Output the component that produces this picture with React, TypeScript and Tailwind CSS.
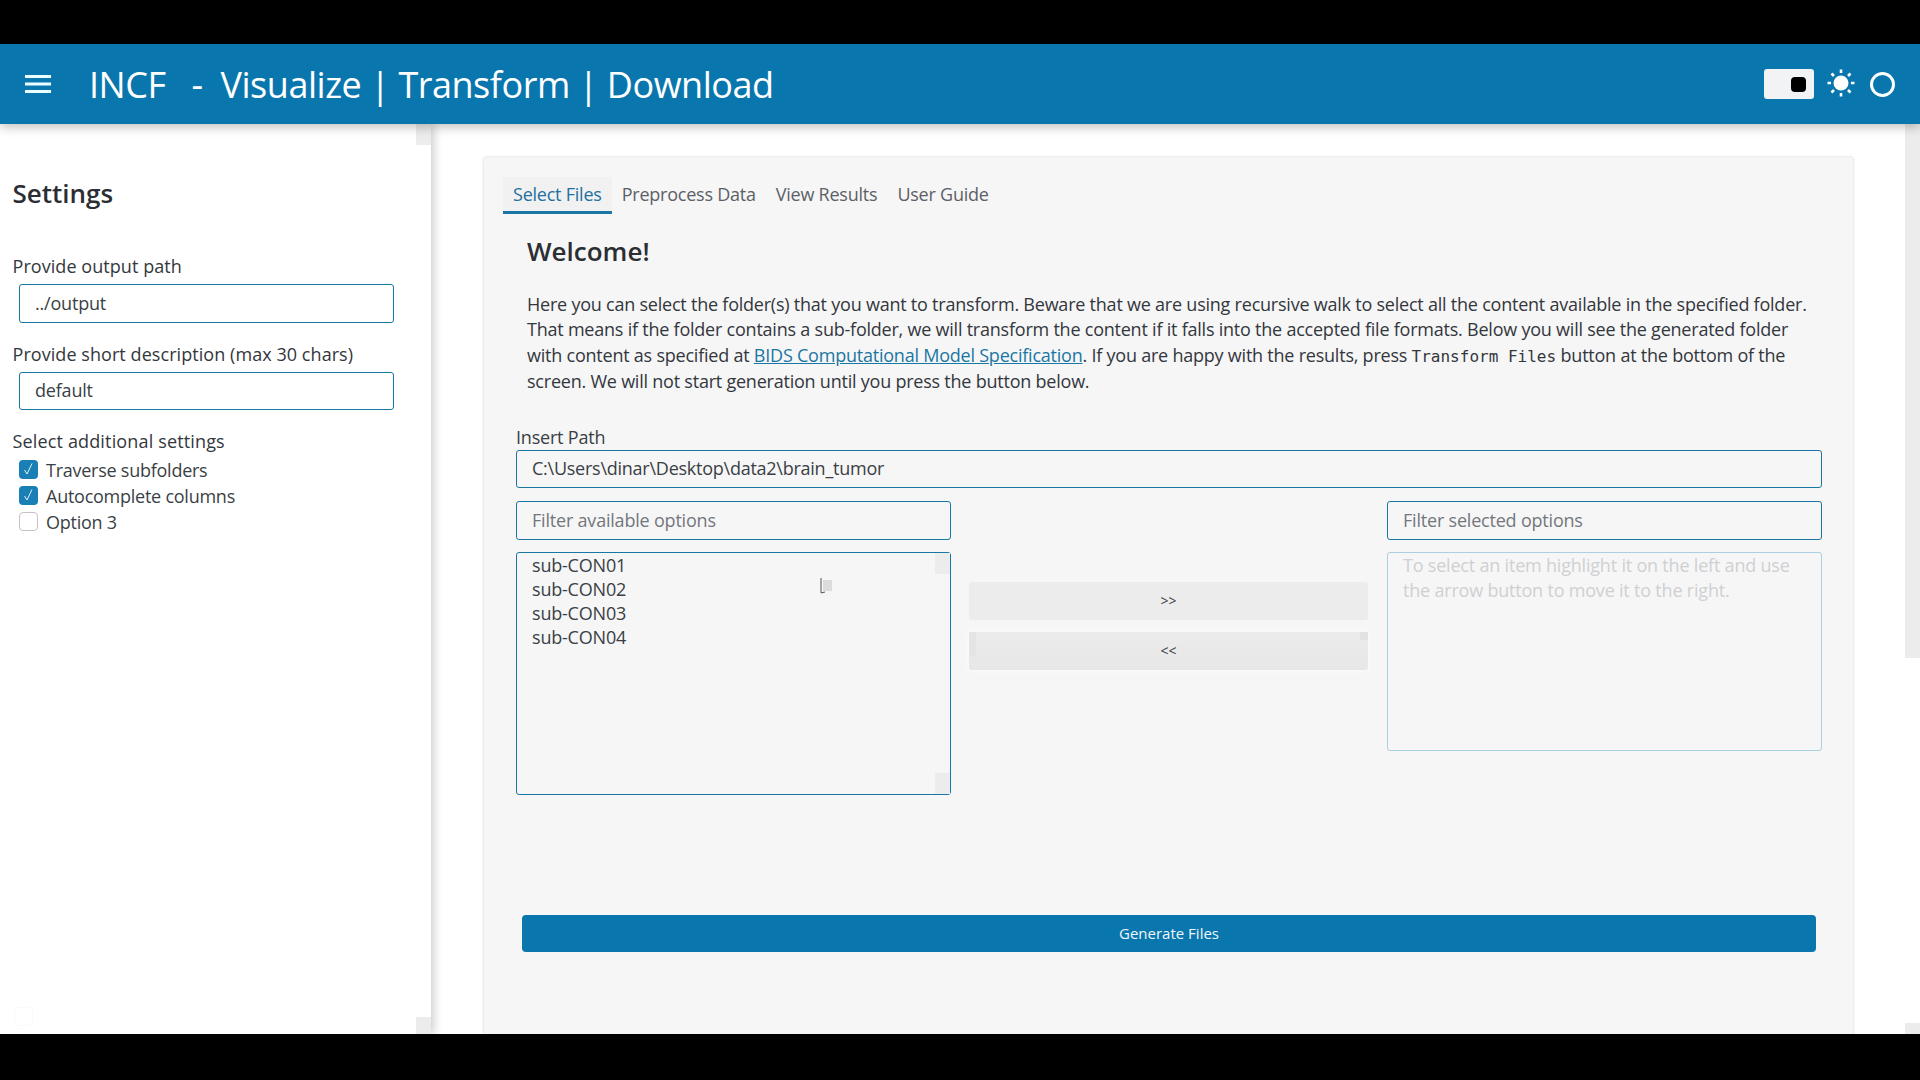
import React from "react";

const font = { fontFamily: '"Open Sans", "Noto Sans", sans-serif' };

function Check({ on, label }: { on?: boolean; label: string }) {
  return (
    <div className="flex h-[26px] items-center">
      <span
        className={
          on
            ? "mb-[2px] ml-[6.5px] flex h-[19px] w-[19px] items-center justify-center rounded-[4px] bg-[#1a7fb5]"
            : "mb-[1px] ml-[6.5px] h-[19px] w-[19px] rounded-[4px] border border-[#c9bfc9] bg-white"
        }
      >
        {on && (
          <svg width="13" height="14" viewBox="0 0 13 14" fill="none">
            <path d="M2.5 8 L5 12 L10 1.5" stroke="#dff1fa" strokeWidth="1" />
          </svg>
        )}
      </span>
      <span className="ml-[8px] text-[18px] leading-[24px] tracking-[-0.25px] text-[#3a3f45]">{label}</span>
    </div>
  );
}

function TextBox({ value, className }: { value: string; className: string }) {
  return (
    <div className={"flex items-center rounded-[3px] border-[1.5px] border-[#1a76a2] pl-[15px] text-[18px] tracking-[-0.2px] text-[#3a3f45] " + className}>
      {value}
    </div>
  );
}

export default function App() {
  return (
    <div className="flex h-screen flex-col overflow-hidden bg-black" style={font}>
      <div className="h-[44px] shrink-0 bg-black" />
      <header className="relative z-20 flex h-[80px] shrink-0 items-center bg-[#0a76ae] pl-[25px] pr-[25px] shadow-[0_3px_10px_rgba(0,0,0,0.25)]">
        <svg width="26" height="22" viewBox="0 0 26 22" className="shrink-0">
          <path d="M0 3.5 H26 M0 11 H26 M0 18.5 H26" stroke="#eaffff" strokeWidth="3" />
        </svg>
        <h1 className="ml-[38px] mt-[2px] whitespace-pre text-[36px] leading-[48px] tracking-[-0.47px] text-white">
          INCF<span className="tracking-[3.6px]">  </span>-<span className="tracking-[-0.4px]">  </span>Visualize | Transform | Download
        </h1>
        <div className="ml-auto flex items-center">
          <div className="flex h-[30px] w-[50px] items-center justify-end rounded-[3px] bg-[#f1f3f5] pr-[8px]">
            <div className="h-[15px] w-[15px] rounded-[4px] bg-black" />
          </div>
          <svg width="30" height="30" viewBox="0 0 30 30" className="ml-[12px] -mt-[2px]">
            <circle cx="15" cy="15" r="7.5" fill="white" />
            <path d="M15 1.5 V5 M15 25 V28.5 M1.5 15 H5 M25 15 H28.5 M5.5 5.5 L8 8 M22 22 L24.5 24.5 M24.5 5.5 L22 8 M8 22 L5.5 24.5" stroke="white" strokeWidth="2.6" />
          </svg>
          <div className="ml-[14px] h-[25px] w-[25px] rounded-full border-[3px] border-white" />
        </div>
      </header>

      <main className="relative flex min-h-0 flex-1 overflow-hidden bg-white">
        <aside className="relative z-10 w-[431px] shrink-0 bg-white pl-[12.5px] pt-[53px] shadow-[3px_0_9px_rgba(0,0,0,0.2)]">
          <div className="absolute right-0 top-0 h-[21px] w-[15px] bg-[#ececec]" />
          <div className="absolute bottom-0 right-0 h-[17px] w-[15px] bg-[#ececec]" />
          <div className="absolute bottom-[8px] left-[14px] h-[19px] w-[19px] rounded-[4px] border border-[#fafafa]" />
          <h2 className="text-[26px] font-semibold leading-[32px] text-[#2b2e33]">Settings</h2>
          <div className="mt-[45px] text-[18px] font-medium leading-[24px] tracking-[0.06px] text-[#33373c]">Provide output path</div>
          <TextBox value="../output" className="ml-[6.5px] mt-[6px] h-[39px] w-[375px]" />
          <div className="mt-[19px] text-[18px] font-medium leading-[24px] tracking-[0.06px] text-[#33373c]">Provide short description (max 30 chars)</div>
          <TextBox value="default" className="ml-[6.5px] mt-[6px] h-[38px] w-[375px] pb-[1px]" />
          <div className="mt-[19px] text-[18px] font-medium leading-[24px] tracking-[0.15px] text-[#33373c]">Select additional settings</div>
          <div className="mt-[4px] flex flex-col">
            <Check on label="Traverse subfolders" />
            <Check on label="Autocomplete columns" />
            <Check label="Option 3" />
          </div>
        </aside>

        <section className="flex min-w-0 flex-1">
          <div className="min-w-0 flex-1 pl-[52px] pr-[51px] pt-[32px]">
            <div className="h-[900px] rounded-[4px] border border-[#ececec] bg-[#f6f6f7] pl-[32px] pr-[31px] pt-[20px] shadow-[0_1px_3px_rgba(0,0,0,0.08)]">
              <nav className="-ml-[13px] flex text-[18px] leading-[24px] tracking-[-0.23px]">
                <div className="h-[37px] border-b-[3px] border-[#1a76a2] bg-[#f1f1f2] px-[10px] pt-[5px] text-[#22709c]">Select Files</div>
                <div className="px-[10px] pt-[5px] text-[#5c6066]">Preprocess Data</div>
                <div className="px-[10px] pt-[5px] text-[#5c6066]">View Results</div>
                <div className="px-[10px] pt-[5px] text-[#5c6066]">User Guide</div>
              </nav>
              <h3 className="ml-[11px] mt-[19px] text-[26px] font-semibold leading-[36px] text-[#2b2e33]">Welcome!</h3>
              <p className="ml-[11px] mt-[23px] text-[18px] leading-[25.4px] tracking-[-0.225px] text-[#33373c]">
                Here you can select the folder(s) that you want to transform. Beware that we are using recursive walk to select all the content available in the specified folder.
                <br />
                That means if the folder contains a sub-folder, we will transform the content if it falls into the accepted file formats. Below you will see the generated folder
                <br />
                with content as specified at <a className="text-[#1a76a2] underline">BIDS Computational Model Specification</a>. If you are happy with the results, press <code className="text-[16px] tracking-normal" style={{ fontFamily: '"DejaVu Sans Mono", monospace' }}>Transform Files</code> button at the bottom of the
                <br />
                screen. We will not start generation until you press the button below.
              </p>
              <div className="mt-[30px] text-[18px] leading-[24px] tracking-[-0.2px] text-[#3a3f45]">Insert Path</div>
              <TextBox value="C:\Users\dinar\Desktop\data2\brain_tumor" className="mt-[1px] h-[38px] tracking-[-0.25px]" />

              <div className="mt-[13px] flex gap-[18px]">
                <div className="w-[435px] shrink-0">
                  <TextBox value="Filter available options" className="h-[39px] text-[#73777c]" />
                  <div className="relative mt-[12px] h-[243px] rounded-[3px] border-[1.5px] border-[#1a76a2] pl-[15px] text-[18px] leading-[24px] tracking-[-0.2px] text-[#3a3f45]">
                    <div>sub-CON01</div>
                    <div>sub-CON02</div>
                    <div>sub-CON03</div>
                    <div>sub-CON04</div>
                    <div className="absolute right-0 top-0 h-[21px] w-[15px] bg-[#ececec]" />
                    <div className="absolute bottom-0 right-0 h-[21px] w-[15px] bg-[#ececec]" />
                    <svg width="13" height="18" viewBox="0 0 13 18" className="absolute left-[303px] top-[24px]">
                      <rect x="3" y="3" width="9" height="11" fill="#dcdcdc" />
                      <path d="M1 1 V16 L5 15" stroke="#555" strokeWidth="1" fill="none" />
                    </svg>
                  </div>
                </div>
                <div className="flex min-w-0 flex-1 flex-col gap-[12px] pr-[1px] pt-[81px]">
                  <button className="h-[38px] rounded-[3px] bg-[#ececed] text-[14px] text-[#3a3f45]">&gt;&gt;</button>
                  <button className="relative h-[38px] rounded-[3px] bg-gradient-to-b from-[#ececed] to-[#e7e7e8] text-[14px] text-[#3a3f45] shadow-[0_0_6px_rgba(255,255,255,0.9)]">
                    &lt;&lt;
                    <span className="absolute left-0 top-0 h-[24px] w-[7px] bg-[#e4e4e5]" />
                    <span className="absolute right-0 top-0 h-[8px] w-[8px] bg-[#e2e2e3]" />
                  </button>
                </div>
                <div className="w-[435px] shrink-0">
                  <TextBox value="Filter selected options" className="h-[39px] text-[#73777c]" />
                  <div className="mt-[12px] h-[199px] rounded-[3px] border-[1.5px] border-[#a9cfe0] pl-[15px] pr-[20px] text-[18px] leading-[25px] tracking-[-0.2px] text-[#cfd0d2]">
                    To select an item highlight it on the left and use the arrow button to move it to the right.
                  </div>
                </div>
              </div>

              <button className="ml-[6px] mt-[120px] block h-[37px] w-[1294px] rounded-[4px] bg-[#0a76ae] text-[15px] font-medium text-[#eef8fc]">Generate Files</button>
            </div>
          </div>
          <div className="flex w-[15px] shrink-0 flex-col justify-between">
            <div className="h-[534px] bg-[#ececec]" />
            <div className="h-[11px] bg-[#ececec]" />
          </div>
        </section>
      </main>
      <div className="relative z-30 h-[46px] shrink-0 bg-black" />
    </div>
  );
}
